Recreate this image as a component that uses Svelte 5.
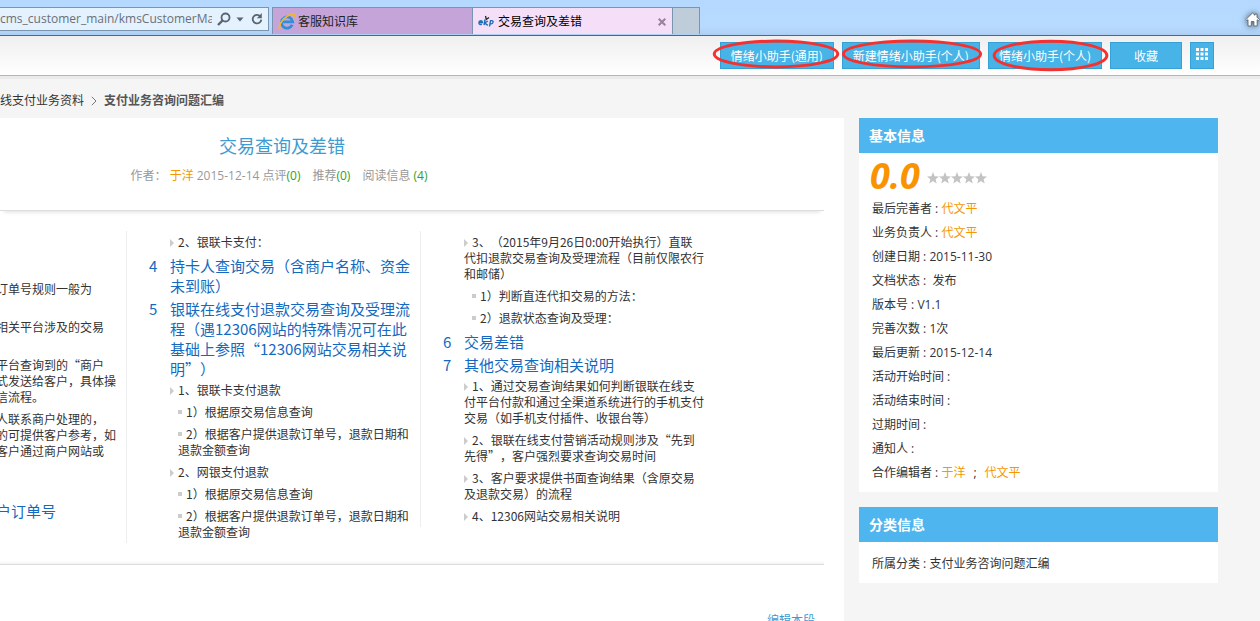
<script lang="ts">
/*******************************************************************************
*                                                                              *
*                    App.svelte - knowledge base document                      *
*                                                                              *
*******************************************************************************/

  type Action = { Label:string; Mark?:'low'|'wide'|'tall' }

  const Actions:Action[] = [
    { Label:'情绪小助手(通用)',     Mark:'low' },
    { Label:'新建情绪小助手(个人)', Mark:'wide' },
    { Label:'情绪小助手(个人)',     Mark:'tall' },
    { Label:'收藏' },
  ]

//----------------------------------------------------------------------------//
//                             Table of Contents                              //
//----------------------------------------------------------------------------//

  type Entry = {
    Kind:  'chapter'|'section'|'detail'|'plain';
    No?:   string;
    Lines: string[];
  }

  const Columns:Entry[][] = [
    [
      { Kind:'plain', Lines:['订单号规则一般为', ''] },
      { Kind:'plain', Lines:['相关平台涉及的交易', ''] },
      { Kind:'plain', Lines:['平台查询到的“商户', '式发送给客户，具体操', '信流程。'] },
      { Kind:'plain', Lines:['人联系商户处理的，', '的可提供客户参考，如', '客户通过商户网站或', ''] },
      { Kind:'chapter', Lines:['', '户订单号'] },
    ],
    [
      { Kind:'section', Lines:['2、银联卡支付：'] },
      { Kind:'chapter', No:'4', Lines:['持卡人查询交易（含商户名称、资金', '未到账）'] },
      { Kind:'chapter', No:'5', Lines:[
        '银联在线支付退款交易查询及受理流', '程（遇12306网站的特殊情况可在此',
        '基础上参照“12306网站交易相关说', '明”）',
      ] },
      { Kind:'section', Lines:['1、银联卡支付退款'] },
      { Kind:'detail',  Lines:['1）根据原交易信息查询'] },
      { Kind:'detail',  Lines:['2）根据客户提供退款订单号，退款日期和', '退款金额查询'] },
      { Kind:'section', Lines:['2、网银支付退款'] },
      { Kind:'detail',  Lines:['1）根据原交易信息查询'] },
      { Kind:'detail',  Lines:['2）根据客户提供退款订单号，退款日期和', '退款金额查询'] },
    ],
    [
      { Kind:'section', Lines:['3、（2015年9月26日0:00开始执行）直联', '代扣退款交易查询及受理流程（目前仅限农行', '和邮储）'] },
      { Kind:'detail',  Lines:['1）判断直连代扣交易的方法：'] },
      { Kind:'detail',  Lines:['2）退款状态查询及受理：'] },
      { Kind:'chapter', No:'6', Lines:['交易差错'] },
      { Kind:'chapter', No:'7', Lines:['其他交易查询相关说明'] },
      { Kind:'section', Lines:['1、通过交易查询结果如何判断银联在线支', '付平台付款和通过全渠道系统进行的手机支付', '交易（如手机支付插件、收银台等）'] },
      { Kind:'section', Lines:['2、银联在线支付营销活动规则涉及“先到', '先得”，客户强烈要求查询交易时间'] },
      { Kind:'section', Lines:['3、客户要求提供书面查询结果（含原交易', '及退款交易）的流程'] },
      { Kind:'section', Lines:['4、12306网站交易相关说明'] },
    ],
  ]

//----------------------------------------------------------------------------//
//                                 Sidebar                                    //
//----------------------------------------------------------------------------//

  type Fact = { Name:string; Value?:string; People?:string[] }

  const Facts:Fact[] = [
    { Name:'最后完善者', People:['代文平'] },
    { Name:'业务负责人', People:['代文平'] },
    { Name:'创建日期',   Value:'2015-11-30' },
    { Name:'文档状态',   Value:' 发布' },
    { Name:'版本号',     Value:'V1.1' },
    { Name:'完善次数',   Value:'1次' },
    { Name:'最后更新',   Value:'2015-12-14' },
    { Name:'活动开始时间' },
    { Name:'活动结束时间' },
    { Name:'过期时间' },
    { Name:'通知人' },
    { Name:'合作编辑者', People:['于洋', '代文平'] },
  ]

  let address = $state('cms_customer_main/kmsCustomerMa')
</script>

<div class="page" lang="zh-CN">
  <header class="browser">
    <div class="address">
      <input type="text" aria-label="地址" bind:value={address} spellcheck="false" />
      <button type="button" aria-label="搜索">
        <svg width="14" height="14" viewBox="0 0 14 14">
          <circle cx="8.5" cy="5.5" r="4" fill="none" stroke="#5a646e" stroke-width="1.8" />
          <path d="M5.5 8.5 1 13" stroke="#5a646e" stroke-width="2.4" />
        </svg>
      </button>
      <button type="button" aria-label="显示地址列表">
        <svg width="8" height="14" viewBox="0 0 8 14"><path d="M0.5 5.5h7L4 9.5z" fill="#5a646e" /></svg>
      </button>
      <button type="button" class="reload" aria-label="刷新">
        <svg width="12" height="14" viewBox="0 0 12 14">
          <path d="M9.2 4.2A4.3 4.3 0 1 0 10.3 7.6" fill="none" stroke="#5a646e" stroke-width="1.8" />
          <path d="M10.8 1v5.2H5.8z" fill="#5a646e" />
        </svg>
      </button>
    </div>
    <nav class="tabs">
      <a class="tab" href="#home">
        <svg width="18" height="18" viewBox="0 0 18 18">
          <path d="M14.2 11.8A5.6 5.6 0 1 1 14.6 8.8H4.6" fill="none" stroke="#2f8fd8" stroke-width="2.8" />
          <path d="M2 16.5C-1 12.5 7 2.5 14.5 1.2c2-.2 2.4 1 1.4 3" fill="none" stroke="#f2b632" stroke-width="1.7" />
        </svg>
        <span>客服知识库</span>
      </a>
      <div class="tab current">
        <a href="#document">
          <svg width="16" height="14" viewBox="0 0 16 14">
            <path d="M1 7.5h3.4q0-1.7-1.6-1.7Q.8 6 .9 8q.2 1.9 3 1.3M11.5 11.5l1-5.7q2.9-.6 2.6 1.4-.4 2-3 1.9" fill="none" stroke="#1d70b8" stroke-width="1.4" />
            <path d="M7 4.5 6 10M9.8 6 6.8 8l3 2.3" fill="none" stroke="#1d70b8" stroke-width="1.5" />
            <path d="M7.5 1l.8 3.5L11 2.5" fill="none" stroke="#222" stroke-width="1.3" />
          </svg>
          <span>交易查询及差错</span>
        </a>
        <button type="button" aria-label="关闭标签页">
          <svg width="8" height="8" viewBox="0 0 8 8"><path d="M.7.7l6.6 6.6M7.3.7.7 7.3" stroke="#94839c" stroke-width="2" /></svg>
        </button>
      </div>
      <button type="button" class="new-tab" aria-label="新建标签页"></button>
    </nav>
    <button type="button" class="home" aria-label="主页">
      <svg width="15" height="15" viewBox="0 0 15 15">
        <path d="M7.5 1 .8 7.6l1 1L3 7.7V14h3.3V9.5h2.6V14H12.200V7.700l1.200.9 1-1L12 5.200V2h-2v1.300z" fill="#fff" stroke="#5c6670" stroke-width=".9" />
      </svg>
    </button>
  </header>

  <div class="toolbar">
    {#each Actions as Action}
      <div class="action">
        <button type="button">{Action.Label}</button>
        {#if Action.Mark}
          <svg class="mark {Action.Mark}" aria-hidden="true">
            <ellipse cx="50%" cy="50%" rx="49%" ry="46%" fill="none" stroke="#f5312f" stroke-width="3" />
          </svg>
        {/if}
      </div>
    {/each}
    <button type="button" class="grid-button" aria-label="更多">
      <svg width="12" height="12" viewBox="0 0 12 12" fill="#fff">
        {#each [0, 4.5, 9] as Y}
          {#each [0, 4.5, 9] as X}
            <rect x={X} y={Y} width="3" height="3" />
          {/each}
        {/each}
      </svg>
    </button>
  </div>

  <nav class="crumbs">
    <a href="#category">线支付业务资料</a>
    <svg width="6" height="10" viewBox="0 0 6 10"><path d="M.8.8 5 5 .8 9.2" fill="none" stroke="#777" /></svg>
    <a class="here" href="#documents">支付业务咨询问题汇编</a>
  </nav>

  <div class="content">
    <main class="article">
      <div class="heading">
        <h1>交易查询及差错</h1>
        <div class="meta">
          <span>作者： <a class="person" href="#author">于洋</a> 2015-12-14 点评<b>(0)</b></span>
          <span>推荐<b>(0)</b></span>
          <span>阅读信息 <b>(4)</b></span>
        </div>
      </div>

      <div class="contents">
        {#each Columns as Column, Index}
          <ul class="column" class:cut={Index === 0}>
            {#each Column as Entry}
              <li class={Entry.Kind}>
                {#if Entry.No}<span class="no">{Entry.No}</span>{/if}
                <a href="#section">
                  {#each Entry.Lines as Line}<span class="line">{Line}</span>{/each}
                </a>
              </li>
            {/each}
          </ul>
        {/each}
      </div>

      <div class="edit"><a href="#edit">编辑本段</a></div>
    </main>

    <aside>
      <section>
        <h2>基本信息</h2>
        <div class="score">
          <strong>0.0</strong>
          <span class="stars" role="img" aria-label="0 / 5">
            {#each { length:5 } as _}
              <svg width="12" height="12" viewBox="0 0 12 12"><path d="M6 0l1.6 4.200 4.400.2-3.400 2.800 1.100 4.300L6 9.100l-3.700 2.400 1.100-4.300L0 4.400l4.400-.2z" fill="#c3c3c3" /></svg>
            {/each}
          </span>
        </div>
        <ul class="facts">
          {#each Facts as Fact}
            <li>{Fact.Name} : {Fact.Value ?? ''}{#each Fact.People ?? [] as Person, Index}{#if Index > 0}<span class="separator">;</span>{/if}<a class="person" href="#person">{Person}</a>{/each}</li>
          {/each}
        </ul>
      </section>
      <section>
        <h2>分类信息</h2>
        <ul class="facts category">
          <li>所属分类 : 支付业务咨询问题汇编</li>
        </ul>
      </section>
    </aside>
  </div>
</div>

<style>
  :global(body) { margin: 0; background: #f5f5f5; }

  .page {
    height: 100vh;
    overflow: hidden;
    background: #f5f5f5;
    color: #333;
    font-family: "Open Sans", "Noto Sans CJK SC", sans-serif;
    font-size: 12px;
    line-height: 16px;
    text-spacing-trim: space-all;
  }
  a      { color: inherit; text-decoration: none; }
  button { font: inherit; border: none; background: none; padding: 0; cursor: pointer; }
  ul     { list-style: none; margin: 0; padding: 0; }
  svg    { display: block; flex-shrink: 0; }

/**** browser bar ****/

  .browser {
    display: flex;
    align-items: flex-end;
    box-sizing: border-box;
    height: 36px;
    padding-bottom: 1px;
    border-bottom: 1px solid #52677c;
    background: linear-gradient(#b5d9fe, #b7dafe 75%, #aecff4);
  }
  .address {
    display: flex;
    align-items: center;
    box-sizing: border-box;
    width: 269px; height: 24px;
    margin-bottom: 3px;
    padding-right: 5px;
    border: 1px solid #7b94b0;
    border-left: none;
    background: #e4f1fe;
    gap: 5px;
  }
  .address input {
    flex: 1;
    min-width: 0;
    padding: 0;
    border: none;
    outline: none;
    background: none;
    color: #6a7078;
    font: 12px/20px "Open Sans", sans-serif;
  }
  .reload { margin-left: 2px; }
  .tabs { display: flex; flex: 1; margin-left: 3px; }
  .tab {
    display: flex;
    align-items: center;
    box-sizing: border-box;
    width: 200px; height: 27px;
    padding: 2px 6px 0 5px;
    border: 1px solid #7b94b0;
    border-width: 1px 0 0 1px;
    background: #c5a5d9;
    color: #222;
    gap: 2px;
  }
  .current      { justify-content: space-between; background: #f5dff8; color: #000; }
  .current a    { display: flex; align-items: center; gap: 4px; }
  .new-tab {
    box-sizing: border-box;
    width: 28px; height: 27px;
    border: 1px solid #7b94b0;
    border-bottom: none;
    background: #bfccd9;
  }
  .home {
    align-self: center;
    padding-top: 4px;
    filter: drop-shadow(0 0 3px #4a5c70);
  }

/**** toolbar ****/

  .toolbar {
    display: flex;
    justify-content: flex-end;
    box-sizing: border-box;
    height: 40px;
    padding: 6px 46px 0 0;
    border-bottom: 1px solid #b5b5b5;
    background: linear-gradient(#efefef, #fff);
    box-shadow: 0 3px 0 #ebebeb;
    gap: 8px;
  }
  .action { position: relative; height: 27px; }
  .action button, .grid-button {
    box-sizing: border-box;
    height: 27px;
    min-width: 72px;
    padding: 0 10px;
    border: 1px solid #35a1d6;
    background: #47b3e7;
    color: #fff;
    font-family: "Noto Sans CJK SC", sans-serif;
  }
  .grid-button {
    display: flex;
    justify-content: center;
    min-width: 24px;
    padding: 5px 0 0;
  }
  .mark { position: absolute; pointer-events: none; overflow: visible; }
  .low  { left: -7px; top: -2px; width: 126px; height: 28px; }
  .wide { left: 0;    top: -2px; width: 140px; height: 28px; }
  .tall { left: 5px;  top: -2px; width: 115px; height: 31px; }

/**** breadcrumbs ****/

  .crumbs {
    display: flex;
    align-items: center;
    box-sizing: border-box;
    height: 42px;
    padding-top: 8px;
    gap: 7px;
  }
  .here { color: #555; font-weight: bold; }

/**** article ****/

  .content {
    display: flex;
    align-items: flex-start;
    padding-right: 42px;
    gap: 15px;
  }
  .article {
    flex: 1;
    min-width: 0;
    overflow: hidden;
    box-sizing: border-box;
    min-height: 560px;
    padding-right: 20px;
    background: #fff;
  }
  .heading {
    box-sizing: border-box;
    height: 93px;
    padding: 16px 260px 0 0;
    border-bottom: 1px solid #ddd;
    box-shadow: 0 5px 4px -4px #ddd;
    text-align: center;
  }
  h1 {
    margin: 0 0 10px;
    color: #3d9bd1;
    font-size: 18px;
    font-weight: normal;
    line-height: 24px;
  }
  .meta    { display: flex; justify-content: center; padding-right: 6px; color: #999; gap: 12px; }
  .meta b  { color: #31a11b; font-weight: normal; }
  .person  { color: #f39800; }

  .contents {
    display: flex;
    align-items: flex-start;
    box-sizing: border-box;
    height: 354px;
    padding-top: 20px;
    border-bottom: 1px solid #ddd;
    box-shadow: inset 0 -3px 3px -2px #eee;
  }
  .column {
    flex: 0 0 293px;
    border-left: 1px solid #eee;
    font-family: "Noto Sans CJK SC", sans-serif;
    white-space: nowrap;
  }
  .column.cut {
    flex-basis: 130px;
    margin-left: -4px;
    padding-top: 47px;
    border-left: none;
  }
  .column li { display: flex; padding: 3px 0 3px 43px; }
  .column .chapter {
    padding: 3px 0 0 22px;
    color: #1369c0;
    font-size: 15px;
    line-height: 20px;
  }
  .column .detail { padding-left: 51px; }
  .column.cut li  { padding-left: 0; }
  .no   { width: 21px; }
  .line { display: block; min-height: 16px; }
  .chapter .line { min-height: 20px; }

  .section .line:first-child::before, .detail .line:first-child::before {
    content: '';
    display: inline-block;
    margin-right: 4px;
  }
  .section .line:first-child::before {
    border: solid transparent;
    border-width: 4px 0 4px 4px;
    border-left-color: #ccc;
  }
  .detail .line:first-child::before {
    width: 4px; height: 4px;
    background: #ccc;
    vertical-align: 3px;
  }

  .edit {
    padding: 48px 9px 16px 0;
    color: #3d9bd1;
    text-align: right;
  }

/**** sidebar ****/

  aside {
    display: flex;
    flex-direction: column;
    flex: 0 0 359px;
    gap: 15px;
  }
  section { background: #fff; }
  h2 {
    margin: 0;
    padding: 0 10px;
    background: #4eb5ee;
    color: #fff;
    font-size: 14px;
    line-height: 35px;
  }
  .score {
    display: flex;
    align-items: center;
    height: 44px;
    padding-left: 11px;
    gap: 7px;
  }
  .score strong { color: #f99300; font-size: 36px; font-style: italic; line-height: 43px; }
  .stars        { display: flex; padding-top: 5px; }
  .facts        { padding: 0 13px 7px; line-height: 24px; }
  .facts li     { white-space: pre-wrap; }
  .separator    { margin: 0 8px; }
  .category     { padding-top: 10px; }
</style>
